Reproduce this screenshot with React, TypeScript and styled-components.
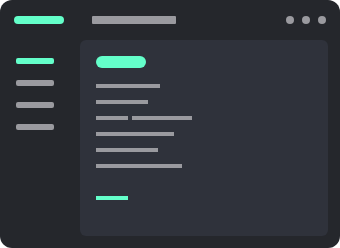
import { createGlobalStyle } from 'styled-components';
import styled from 'styled-components';

const GlobalStyle = createGlobalStyle`
  html, body {
    margin: 0;
    padding: 0;
    background: #ffffff;
    font-family: "Liberation Sans", Arial, sans-serif;
  }
`;

const ACCENT = '#64ffca';
const MUTED = '#9a9a9f';

const Window = styled.div`
  width: 340px;
  height: 248px;
  border-radius: 12px;
  background: #25272c;
  display: grid;
  grid-template-columns: 80px 1fr;
  grid-template-rows: 40px 1fr;
  overflow: hidden;
`;

const Header = styled.div`
  grid-column: 1 / 3;
  display: flex;
  align-items: center;
  padding: 0 14px;
`;

const Logo = styled.div`
  width: 50px;
  height: 8px;
  border-radius: 4px;
  background: ${ACCENT};
`;

const TitleBar = styled.div`
  width: 84px;
  height: 8px;
  margin-left: 28px;
  border-radius: 1px;
  background: ${MUTED};
`;

const Dots = styled.div`
  margin-left: auto;
  display: flex;
  gap: 8px;
`;

const Dot = styled.span`
  width: 8px;
  height: 8px;
  border-radius: 50%;
  background: ${MUTED};
`;

const Sidebar = styled.div`
  display: flex;
  flex-direction: column;
  gap: 16px;
  padding: 18px 0 0 16px;
`;

const NavItem = styled.div<{ $active?: boolean }>`
  width: 38px;
  height: 6px;
  border-radius: 2px;
  background: ${(p) => (p.$active ? ACCENT : MUTED)};
`;

const Panel = styled.div`
  margin: 0 12px 12px 0;
  border-radius: 6px;
  background: #2f323b;
  padding: 16px;
  display: flex;
  flex-direction: column;
`;

const Heading = styled.div`
  width: 50px;
  height: 12px;
  border-radius: 6px;
  background: ${ACCENT};
  margin-bottom: 16px;
`;

const Lines = styled.div`
  display: flex;
  flex-direction: column;
  gap: 12px;
`;

const LineRow = styled.div`
  display: flex;
  gap: 4px;
`;

const Line = styled.div<{ $w: number; $accent?: boolean }>`
  width: ${(p) => p.$w}px;
  height: 4px;
  background: ${(p) => (p.$accent ? ACCENT : MUTED)};
`;

const Action = styled.div`
  margin-top: 28px;
`;

const rows: number[][] = [[64], [52], [32, 60], [78], [62], [86]];

export default function App() {
  return (
    <>
      <GlobalStyle />
      <Window>
        <Header>
          <Logo />
          <TitleBar />
          <Dots>
            <Dot />
            <Dot />
            <Dot />
          </Dots>
        </Header>
        <Sidebar>
          <NavItem $active />
          <NavItem />
          <NavItem />
          <NavItem />
        </Sidebar>
        <Panel>
          <Heading />
          <Lines>
            {rows.map((r, i) => (
              <LineRow key={i}>
                {r.map((w, j) => (
                  <Line key={j} $w={w} />
                ))}
              </LineRow>
            ))}
          </Lines>
          <Action>
            <Line $w={32} $accent />
          </Action>
        </Panel>
      </Window>
    </>
  );
}
